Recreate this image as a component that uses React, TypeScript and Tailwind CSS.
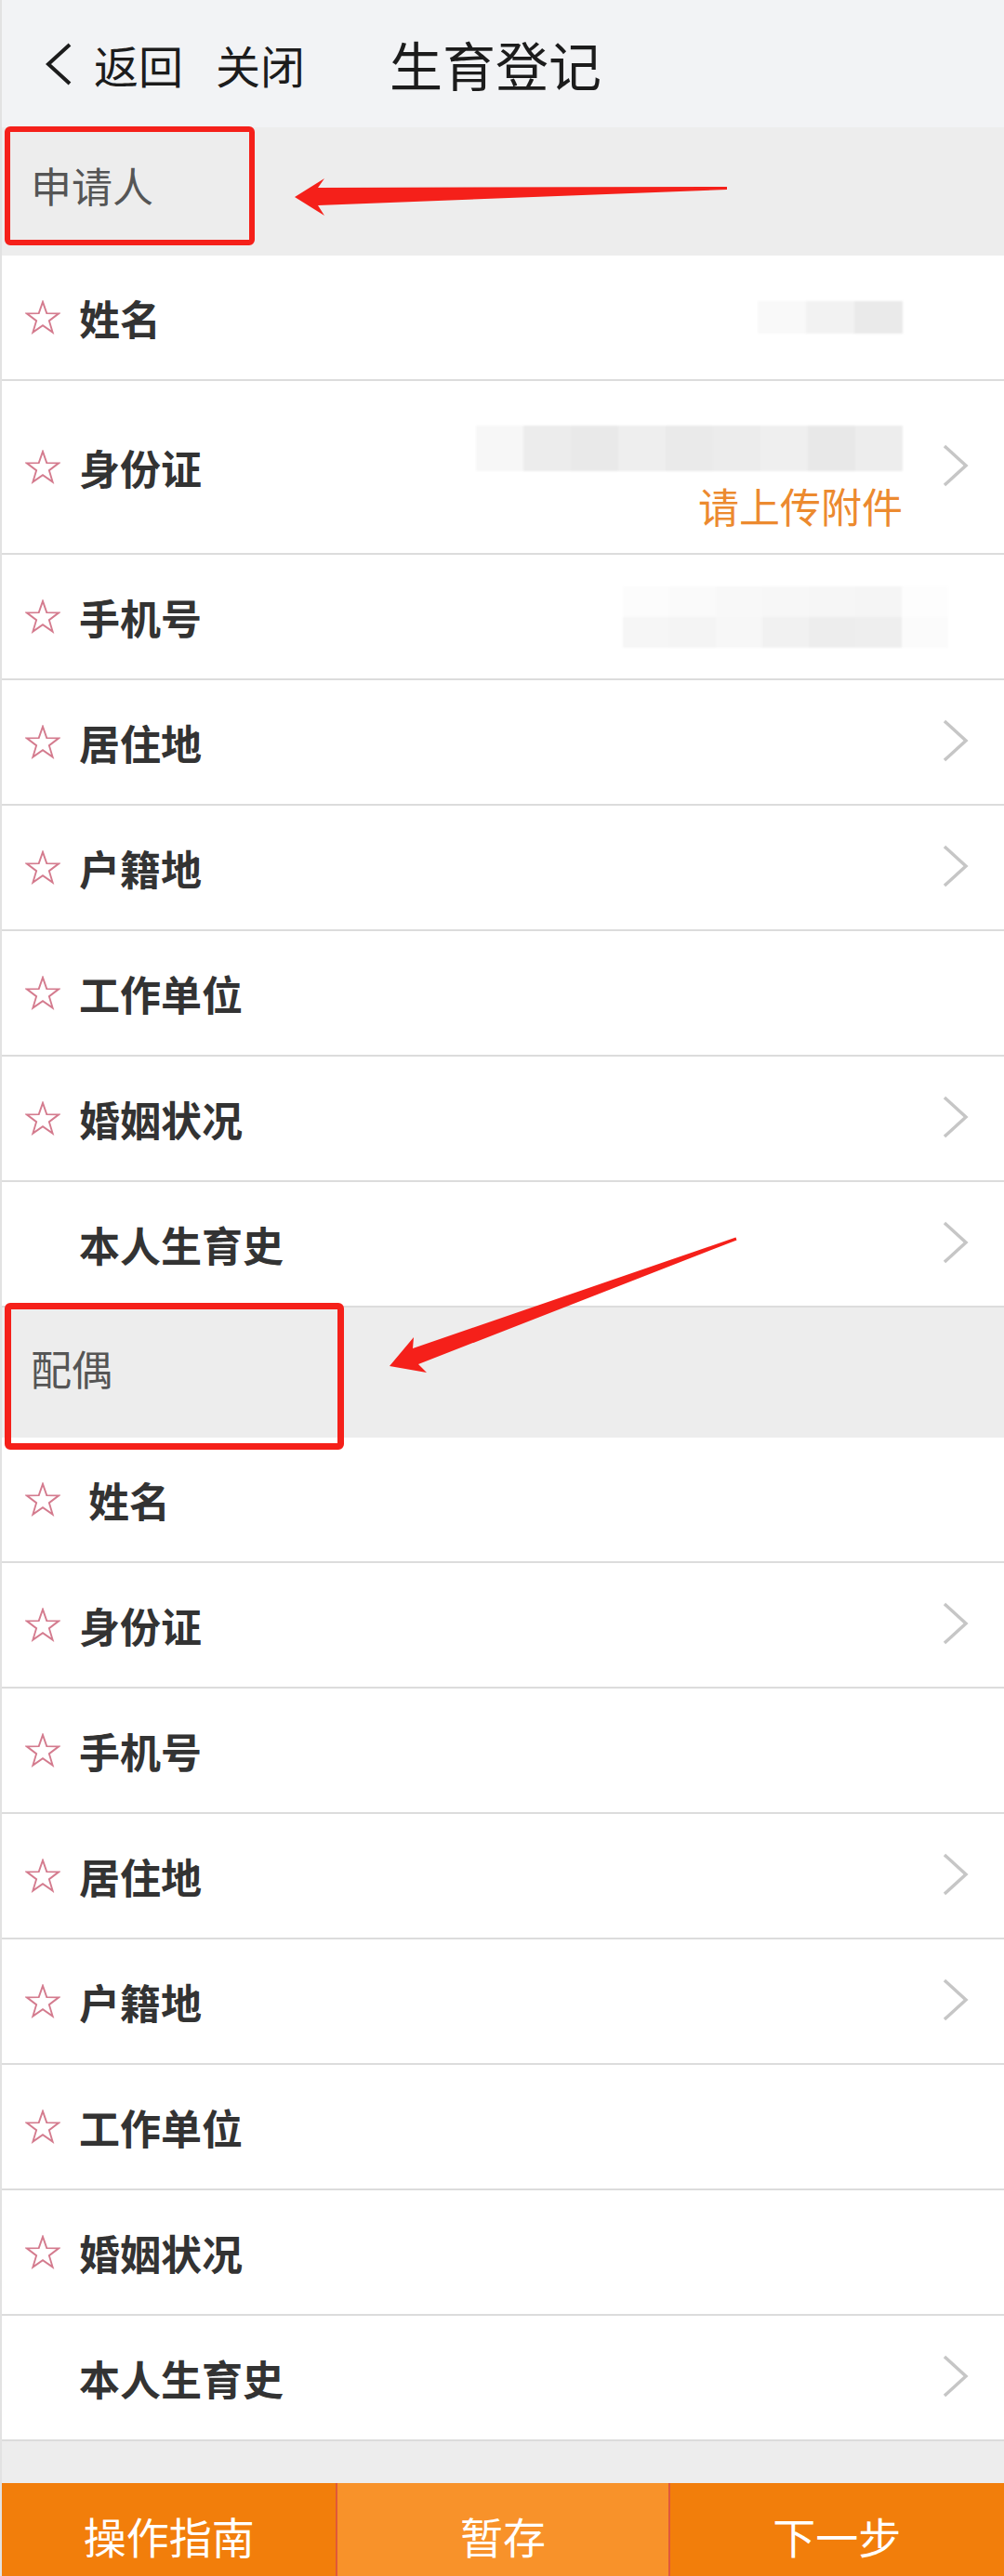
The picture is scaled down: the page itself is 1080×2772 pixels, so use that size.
import React from 'react'

type Field = {
  label: string
  star?: boolean
  arrow?: boolean
  indent?: boolean
  value?: React.ReactNode
  tall?: boolean
}

const Star = () => (
  <svg width="38" height="38" viewBox="-1 -1 40 40" className="shrink-0">
    <polygon
      points="19,1 23.47,13.85 37.07,14.13 26.23,22.35 30.17,35.37 19,27.6 7.83,35.37 11.77,22.35 0.93,14.13 14.53,13.85"
      fill="none"
      stroke="#d47b8e"
      strokeWidth="2"
      strokeLinejoin="miter"
    />
  </svg>
)

const Chevron = ({ show }: { show?: boolean }) => (
  <div className="w-[29px] h-[48px] ml-[42px] shrink-0 -mt-[4px]">
    {show && (
      <svg width="29" height="48" viewBox="0 0 29 48">
        <polyline points="3,3 26,24 3,45" fill="none" stroke="#c6c6c6" strokeWidth="3.5" />
      </svg>
    )}
  </div>
)

// blurred-out personal data, as pixel blocks
const Blocks = ({ rows, w, h }: { rows: string[][]; w: number; h: number }) => (
  <div className="flex flex-col blur-[1px]">
    {rows.map((r, i) => (
      <div key={i} className="flex">
        {r.map((c, j) => (
          <div key={j} style={{ background: c, width: w, height: h }} />
        ))}
      </div>
    ))}
  </div>
)

const applicant: Field[] = [
  {
    label: '姓名',
    star: true,
    value: <Blocks rows={[['#f9f9f9', '#f2f2f2', '#eaeaea']]} w={52} h={35} />,
  },
  {
    label: '身份证',
    star: true,
    arrow: true,
    tall: true,
    value: (
      <div className="flex flex-col items-end mt-[19px]">
        <Blocks
          rows={[['#f7f7f7', '#ececec', '#e9e9e9', '#eeeeee', '#eaeaea', '#ececec', '#efefef', '#e8e8e8', '#ededed']]}
          w={51}
          h={49}
        />
        <div className="mt-[15px] text-[44px] leading-[44px] text-[#ec8a2f]">请上传附件</div>
      </div>
    ),
  },
  {
    label: '手机号',
    star: true,
    value: (
      <div className="mr-[-49px]">
        <Blocks
          rows={[
            ['#fcfcfc', '#fafafa', '#f8f8f8', '#f7f7f7', '#f6f6f6', '#f5f5f5', '#fdfdfd'],
            ['#f6f6f6', '#f4f4f4', '#f7f7f7', '#f1f1f1', '#ededed', '#eeeeee', '#fbfbfb'],
          ]}
          w={50}
          h={33}
        />
      </div>
    ),
  },
  { label: '居住地', star: true, arrow: true },
  { label: '户籍地', star: true, arrow: true },
  { label: '工作单位', star: true },
  { label: '婚姻状况', star: true, arrow: true },
  { label: '本人生育史', arrow: true },
]

const spouse: Field[] = [
  { label: '姓名', star: true, indent: true },
  { label: '身份证', star: true, arrow: true },
  { label: '手机号', star: true },
  { label: '居住地', star: true, arrow: true },
  { label: '户籍地', star: true, arrow: true },
  { label: '工作单位', star: true },
  { label: '婚姻状况', star: true },
  { label: '本人生育史', arrow: true },
]

const Row = ({ f }: { f: Field }) => (
  <div
    className={`flex items-center bg-white border-b-2 border-[#dcdcdc] pl-[25px] pr-[38px] ${
      f.tall ? 'h-[187px]' : 'h-[135px]'
    }`}
  >
    <div className="w-[38px] shrink-0">{f.star && <Star />}</div>
    <div
      className={`text-[44px] leading-[44px] font-bold text-[#333] ${f.indent ? 'ml-[30px]' : 'ml-[20px]'}`}
    >
      {f.label}
    </div>
    <div className="flex-1 flex justify-end items-center">{f.value}</div>
    <Chevron show={f.arrow} />
  </div>
)

const Band = ({ title, h, pb }: { title: string; h: string; pb: string }) => (
  <div className={`flex items-center bg-[#ededed] pl-[31px] text-[44px] leading-[44px] text-[#555] ${h} ${pb}`}>
    {title}
  </div>
)

export default function App() {
  return (
    <div className="relative w-[1080px] h-[2772px] overflow-hidden bg-white border-l-2 border-[#e2e2e2] font-['Noto_Sans_CJK_SC','Noto_Sans',sans-serif]">
      {/* header */}
      <div className="flex items-center h-[137px] bg-[#f2f3f5] pl-[46px] text-[#1c1c1c]">
        <svg width="30" height="46" viewBox="0 0 30 46" className="shrink-0">
          <polyline points="27,2 4,23 27,44" fill="none" stroke="#1c1c1c" strokeWidth="4" />
        </svg>
        <span className="ml-[23px] text-[48px] leading-[48px]">返回</span>
        <span className="ml-[35px] text-[48px] leading-[48px]">关闭</span>
        <span className="ml-[91px] text-[57px] leading-[57px]">生育登记</span>
      </div>

      <Band title="申请人" h="h-[138px]" pb="pb-[14px]" />
      {applicant.map((f, i) => (
        <Row key={i} f={f} />
      ))}

      <Band title="配偶" h="h-[140px]" pb="pb-[10px]" />
      {spouse.map((f, i) => (
        <Row key={i} f={f} />
      ))}

      <div className="h-[45px] bg-[#ededed]" />

      {/* bottom actions */}
      <div className="grid grid-cols-3 h-[100px] text-white text-[46px] leading-[46px]">
        <div className="flex items-center justify-center pt-[12px] bg-[#f27e0b]">操作指南</div>
        <div className="flex items-center justify-center pt-[12px] bg-[#f8922a] border-x-2 border-[#e0583a]">暂存</div>
        <div className="flex items-center justify-center pt-[12px] bg-[#f27e0b]">下一步</div>
      </div>

      {/* annotation marks */}
      <div className="absolute left-[3px] top-[136px] w-[269px] h-[128px] border-[6px] border-[#f5201a] rounded-[6px]" />
      <div className="absolute left-[3px] top-[1402px] w-[365px] h-[158px] border-[7px] border-[#f5201a] rounded-[6px]" />
      <svg className="absolute left-0 top-0 pointer-events-none" width="1080" height="2772">
        <polygon
          points="315,212 347,192 340,202 780,201 780,204 340,221 347,232"
          fill="#f5201a"
        />
        <polygon
          points="417,1470 443,1439 442,1451 789.5,1331.6 790.5,1334.4 448,1468 457,1477"
          fill="#f5201a"
        />
      </svg>
    </div>
  )
}
